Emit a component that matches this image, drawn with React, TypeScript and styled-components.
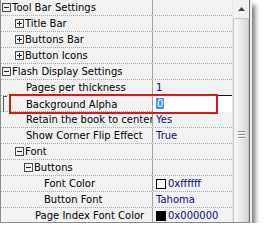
import React from 'react'
import styled, { createGlobalStyle } from 'styled-components'

const GlobalStyle = createGlobalStyle`
  html, body {
    margin: 0;
    padding: 0;
    background: #ffffff;
  }
  body {
    font-family: "DejaVu Sans", Tahoma, sans-serif;
    font-size: 10px;
  }
`

const Frame = styled.div`
  position: relative;
  display: flex;
  width: 250px;
  height: 223px;
  box-sizing: border-box;
  border-left: 1px solid #8e8e8e;
  border-right: 1px solid #6a6a6a;
  border-bottom: 1px solid #8a8a8a;
  background: #f2f2f2;
  box-shadow: 2px 0 0 #ededed, 5px 5px 5px rgba(0, 0, 0, 0.55);
`

const Grid = styled.div`
  display: flex;
  flex-direction: column;
  width: 231px;
  overflow: hidden;
`

const Row = styled.div`
  display: grid;
  grid-template-columns: 152px 1fr;
  height: 15px;
  border-bottom: 1px dotted #a6a6a6;
  flex-shrink: 0;
`

const NameCell = styled.div<{ $indent: number }>`
  position: relative;
  display: flex;
  align-items: center;
  gap: 1px;
  padding-left: ${p => p.$indent}px;
  border-right: 1px solid #a0a0a0;
  white-space: nowrap;
  overflow: hidden;
  color: #000000;
  line-height: 15px;
`

const ValueCell = styled.div<{ $editing?: boolean }>`
  display: flex;
  align-items: center;
  gap: 2px;
  padding-left: 3px;
  white-space: nowrap;
  overflow: hidden;
  color: #0a0a80;
  line-height: 15px;
  background: ${p => (p.$editing ? '#ffffff' : 'transparent')};
  box-shadow: ${p => (p.$editing ? 'inset 0 1px 0 #111111' : 'none')};
  margin-top: ${p => (p.$editing ? '-1px' : '0')};
  height: ${p => (p.$editing ? '17px' : 'auto')};
`

const Toggle = styled.span`
  position: relative;
  display: inline-block;
  width: 9px;
  height: 9px;
  box-sizing: border-box;
  border: 1px solid #4a4a4a;
  flex-shrink: 0;
  &::before {
    content: '';
    position: absolute;
    left: 1px;
    top: 3px;
    width: 5px;
    height: 1px;
    background: #222222;
  }
`

const PlusToggle = styled(Toggle)`
  &::after {
    content: '';
    position: absolute;
    left: 3px;
    top: 1px;
    width: 1px;
    height: 5px;
    background: #222222;
  }
`

const RowMarker = styled.span`
  position: absolute;
  left: 2px;
  top: 0;
  width: 3px;
  height: 16px;
  border-left: 1px solid #5a5a5a;
  border-top: 1px solid #5a5a5a;
`

const Swatch = styled.span<{ $color: string }>`
  display: inline-block;
  width: 10px;
  height: 10px;
  box-sizing: border-box;
  border: 1px solid #000000;
  background: ${p => p.$color};
  flex-shrink: 0;
`

const Selected = styled.span`
  background: #3399ff;
  color: #ffffff;
  padding: 0 1px;
  line-height: 11px;
`

const Highlight = styled.div`
  position: absolute;
  left: 8px;
  top: 94px;
  width: 209px;
  height: 20px;
  box-sizing: border-box;
  border: 2px solid #e3151c;
  pointer-events: none;
`

const ScrollBar = styled.div`
  display: flex;
  flex-direction: column;
  width: 16px;
  border-left: 1px solid #e6e6e6;
  background: #f0f0f0;
`

const ArrowButton = styled.div`
  display: flex;
  justify-content: center;
  align-items: center;
  height: 18px;
  flex-shrink: 0;
`

const Thumb = styled.div`
  flex: 1;
  display: flex;
  flex-direction: column;
  align-items: center;
  padding-top: 112px;
  box-sizing: border-box;
  border: 1px solid #c4c4c4;
  border-bottom: none;
  border-radius: 2px 2px 0 0;
  background: linear-gradient(to right, #f6f6f6, #e4e4e4 60%, #d6d6d6);
`

const GripLine = styled.span`
  display: block;
  width: 7px;
  height: 1px;
  margin-bottom: 1px;
  background: #8a8a8a;
  border-bottom: 1px solid #fafafa;
`

interface RowData {
  label: string
  indent: number
  toggle?: 'minus' | 'plus'
  value?: string
  swatch?: string
  editing?: boolean
}

const ROWS: RowData[] = [
  { label: 'Tool Bar Settings', indent: 1, toggle: 'minus' },
  { label: 'Title Bar', indent: 14, toggle: 'plus' },
  { label: 'Buttons Bar', indent: 14, toggle: 'plus' },
  { label: 'Button Icons', indent: 14, toggle: 'plus' },
  { label: 'Flash Display Settings', indent: 1, toggle: 'minus' },
  { label: 'Pages per thickness', indent: 25, value: '1' },
  { label: 'Background Alpha', indent: 25, value: '0', editing: true },
  { label: 'Retain the book to center', indent: 25, value: 'Yes' },
  { label: 'Show Corner Flip Effect', indent: 25, value: 'True' },
  { label: 'Font', indent: 14, toggle: 'minus' },
  { label: 'Buttons', indent: 23, toggle: 'minus' },
  { label: 'Font Color', indent: 43, value: '0xffffff', swatch: '#ffffff' },
  { label: 'Button Font', indent: 43, value: 'Tahoma' },
  { label: 'Page Index Font Color', indent: 34, value: '0x000000', swatch: '#000000' },
]

function PropertyRow({ label, indent, toggle, value, swatch, editing }: RowData) {
  return (
    <Row>
      <NameCell $indent={indent}>
        {editing && <RowMarker />}
        {toggle === 'minus' && <Toggle />}
        {toggle === 'plus' && <PlusToggle />}
        <span>{label}</span>
      </NameCell>
      <ValueCell $editing={editing}>
        {swatch && <Swatch $color={swatch} />}
        {editing ? <Selected>{value}</Selected> : value}
      </ValueCell>
    </Row>
  )
}

export default function App() {
  return (
    <>
      <GlobalStyle />
      <Frame>
        <Grid>
          {ROWS.map(r => (
            <PropertyRow key={r.label} {...r} />
          ))}
        </Grid>
        <ScrollBar>
          <ArrowButton>
            <svg width="7" height="4" viewBox="0 0 7 4">
              <path d="M0 4 L3.5 0 L7 4 Z" fill="#404040" />
            </svg>
          </ArrowButton>
          <Thumb>
            <GripLine />
            <GripLine />
            <GripLine />
          </Thumb>
        </ScrollBar>
        <Highlight />
      </Frame>
    </>
  )
}
